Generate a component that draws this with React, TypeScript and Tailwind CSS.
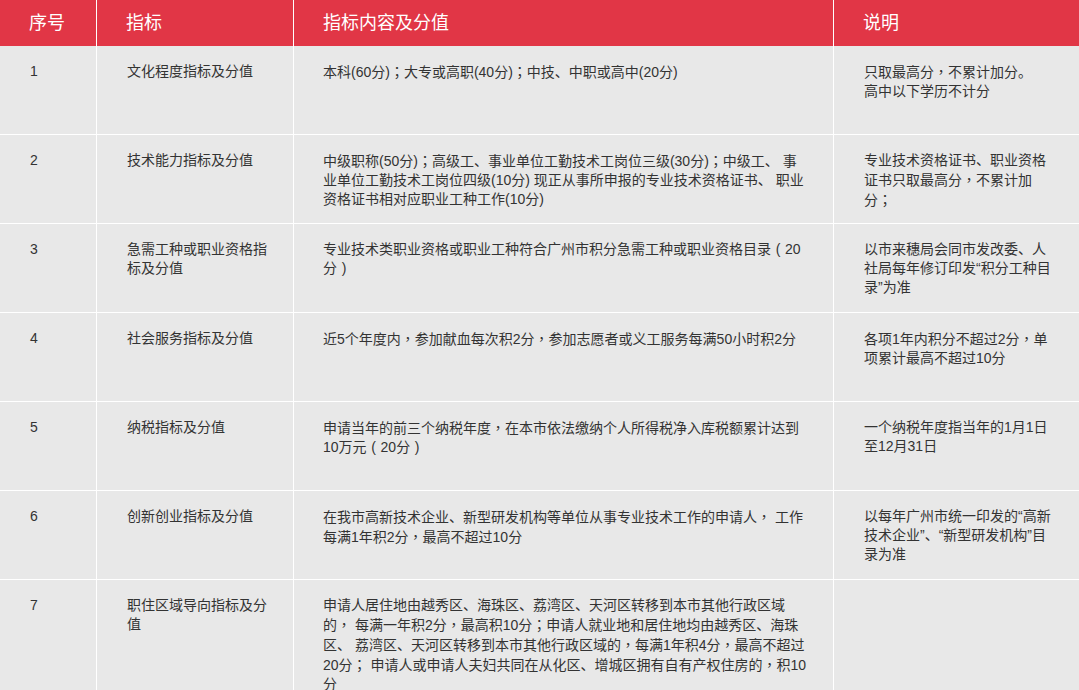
import React from "react";

type Row = { n: string; name: string[]; content: string[]; note: string[] };

const rows: Row[] = [
  {
    n: "1",
    name: ["文化程度指标及分值"],
    content: ["本科(60分)；大专或高职(40分)；中技、中职或高中(20分)"],
    note: ["只取最高分，不累计加分。", "高中以下学历不计分"],
  },
  {
    n: "2",
    name: ["技术能力指标及分值"],
    content: [
      "中级职称(50分)；高级工、事业单位工勤技术工岗位三级(30分)；中级工、 事",
      "业单位工勤技术工岗位四级(10分) 现正从事所申报的专业技术资格证书、 职业",
      "资格证书相对应职业工种工作(10分)",
    ],
    note: ["专业技术资格证书、职业资格", "证书只取最高分，不累计加", "分；"],
  },
  {
    n: "3",
    name: ["急需工种或职业资格指", "标及分值"],
    content: ["专业技术类职业资格或职业工种符合广州市积分急需工种或职业资格目录（20", "分）"],
    note: ["以市来穗局会同市发改委、人", "社局每年修订印发“积分工种目", "录”为准"],
  },
  {
    n: "4",
    name: ["社会服务指标及分值"],
    content: ["近5个年度内，参加献血每次积2分，参加志愿者或义工服务每满50小时积2分"],
    note: ["各项1年内积分不超过2分，单", "项累计最高不超过10分"],
  },
  {
    n: "5",
    name: ["纳税指标及分值"],
    content: ["申请当年的前三个纳税年度，在本市依法缴纳个人所得税净入库税额累计达到", "10万元（20分）"],
    note: ["一个纳税年度指当年的1月1日", "至12月31日"],
  },
  {
    n: "6",
    name: ["创新创业指标及分值"],
    content: ["在我市高新技术企业、新型研发机构等单位从事专业技术工作的申请人， 工作", "每满1年积2分，最高不超过10分"],
    note: ["以每年广州市统一印发的“高新", "技术企业”、“新型研发机构”目", "录为准"],
  },
  {
    n: "7",
    name: ["职住区域导向指标及分", "值"],
    content: [
      "申请人居住地由越秀区、海珠区、荔湾区、天河区转移到本市其他行政区域",
      "的， 每满一年积2分，最高积10分；申请人就业地和居住地均由越秀区、海珠",
      "区、 荔湾区、天河区转移到本市其他行政区域的，每满1年积4分，最高不超过",
      "20分； 申请人或申请人夫妇共同在从化区、增城区拥有自有产权住房的，积10",
      "分",
    ],
    note: [],
  },
];

function Text({ s }: { s: string }) {
  const parts = s.split(/([，；（）])/);
  return (
    <>
      {parts.map((p, i) => {
        if (p === "，" || p === "；")
          return (
            <span key={i} style={{ fontFamily: '"Noto Sans CJK TC", sans-serif' }}>
              {p}
            </span>
          );
        if (p === "（")
          return (
            <span key={i} className="inline-block w-[14px] text-center">
              (
            </span>
          );
        if (p === "）")
          return (
            <span key={i} className="inline-block w-[14px] text-center">
              )
            </span>
          );
        return <React.Fragment key={i}>{p}</React.Fragment>;
      })}
    </>
  );
}

function Lines({ lines }: { lines: string[] }) {
  return (
    <>
      {lines.map((l, i) => (
        <div key={i} className="whitespace-pre">
          <Text s={l} />
        </div>
      ))}
    </>
  );
}

export default function App() {
  return (
    <div
      className="w-[1079px] bg-[#e8e8e8] text-[#333333]"
      style={{ fontFamily: '"Liberation Sans", "Noto Sans CJK SC", sans-serif' }}
    >
      <div className="grid h-[46px] grid-cols-[96px_197px_540px_1fr] bg-[#e13646] text-[18px] text-white">
        <div className="flex items-center pl-[29px]">序号</div>
        <div className="flex items-center border-l border-white pl-[29px]">指标</div>
        <div className="flex items-center border-l border-white pl-[29px]">指标内容及分值</div>
        <div className="flex items-center border-l border-white pl-[29px]">说明</div>
      </div>
      {rows.map((r, i) => (
        <div
          key={r.n}
          className={
            "grid grid-cols-[96px_197px_540px_1fr] text-[14px] leading-[19px] " +
            (i === rows.length - 1 ? "min-h-[120px]" : "h-[89px] border-b border-white")
          }
        >
          <div className="pl-[30px] pt-[16px]">{r.n}</div>
          <div className="border-l border-white pl-[30px] pt-[16px]">
            <Lines lines={r.name} />
          </div>
          <div className="border-l border-white pl-[29px] pt-[16px] pb-[16px]">
            <Lines lines={r.content} />
          </div>
          <div className="border-l border-white pl-[30px] pt-[16px]">
            <Lines lines={r.note} />
          </div>
        </div>
      ))}
    </div>
  );
}
